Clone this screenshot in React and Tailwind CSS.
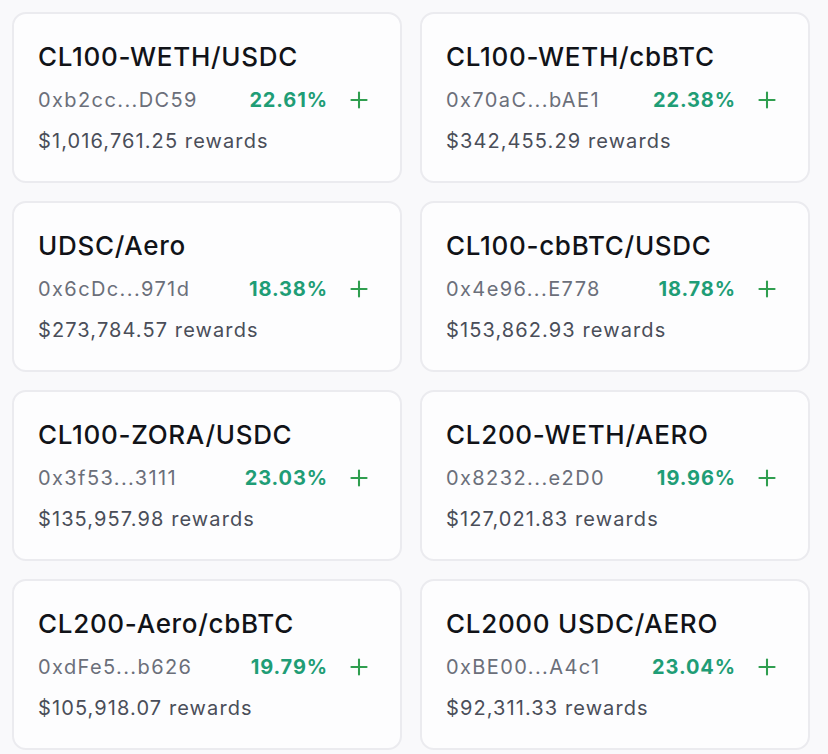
import { Plus } from "lucide-react";

const pools = [
  { name: "CL100-WETH/USDC", addr: "0xb2cc...DC59", apr: "22.61%", rewards: "$1,016,761.25" },
  { name: "CL100-WETH/cbBTC", addr: "0x70aC...bAE1", apr: "22.38%", rewards: "$342,455.29" },
  { name: "UDSC/Aero", addr: "0x6cDc...971d", apr: "18.38%", rewards: "$273,784.57" },
  { name: "CL100-cbBTC/USDC", addr: "0x4e96...E778", apr: "18.78%", rewards: "$153,862.93" },
  { name: "CL100-ZORA/USDC", addr: "0x3f53...3111", apr: "23.03%", rewards: "$135,957.98" },
  { name: "CL200-WETH/AERO", addr: "0x8232...e2D0", apr: "19.96%", rewards: "$127,021.83" },
  { name: "CL200-Aero/cbBTC", addr: "0xdFe5...b626", apr: "19.79%", rewards: "$105,918.07" },
  { name: "CL2000 USDC/AERO", addr: "0xBE00...A4c1", apr: "23.04%", rewards: "$92,311.33" },
];

function PoolCard({ pool }) {
  return (
    <div className="h-[171px] rounded-[14px] border-2 border-[#ebebef] bg-[#fdfdfe] pl-6 pr-[28px] pt-[26px]">
      <h3 className="text-[26px] leading-[34px] font-medium text-[#111318] tracking-[0.7px]">
        {pool.name}
      </h3>
      <div className="mt-[11px] flex items-center h-[30px]">
        <span className="flex-1 text-[20px] text-[#6b6f7a] tracking-[1.4px]">{pool.addr}</span>
        <span className="text-[20px] font-bold text-[#1f9d76] tracking-[0.9px]">{pool.apr}</span>
        <Plus className="ml-[18px] text-[#2f9e4f]" size={26} strokeWidth={1.9} />
      </div>
      <p className="mt-[12px] text-[20px] leading-[28px] text-[#4a4e59] tracking-[1.1px]">
        {pool.rewards} rewards
      </p>
    </div>
  );
}

export default function App() {
  return (
    <div
      className="min-h-screen bg-[#f9f9fb] p-3"
      style={{ fontFamily: "Inter, 'Noto Sans', sans-serif" }}
    >
      <div className="grid grid-cols-[390px_390px] gap-[18px]">
        {pools.map((pool) => (
          <PoolCard key={pool.addr} pool={pool} />
        ))}
      </div>
    </div>
  );
}
